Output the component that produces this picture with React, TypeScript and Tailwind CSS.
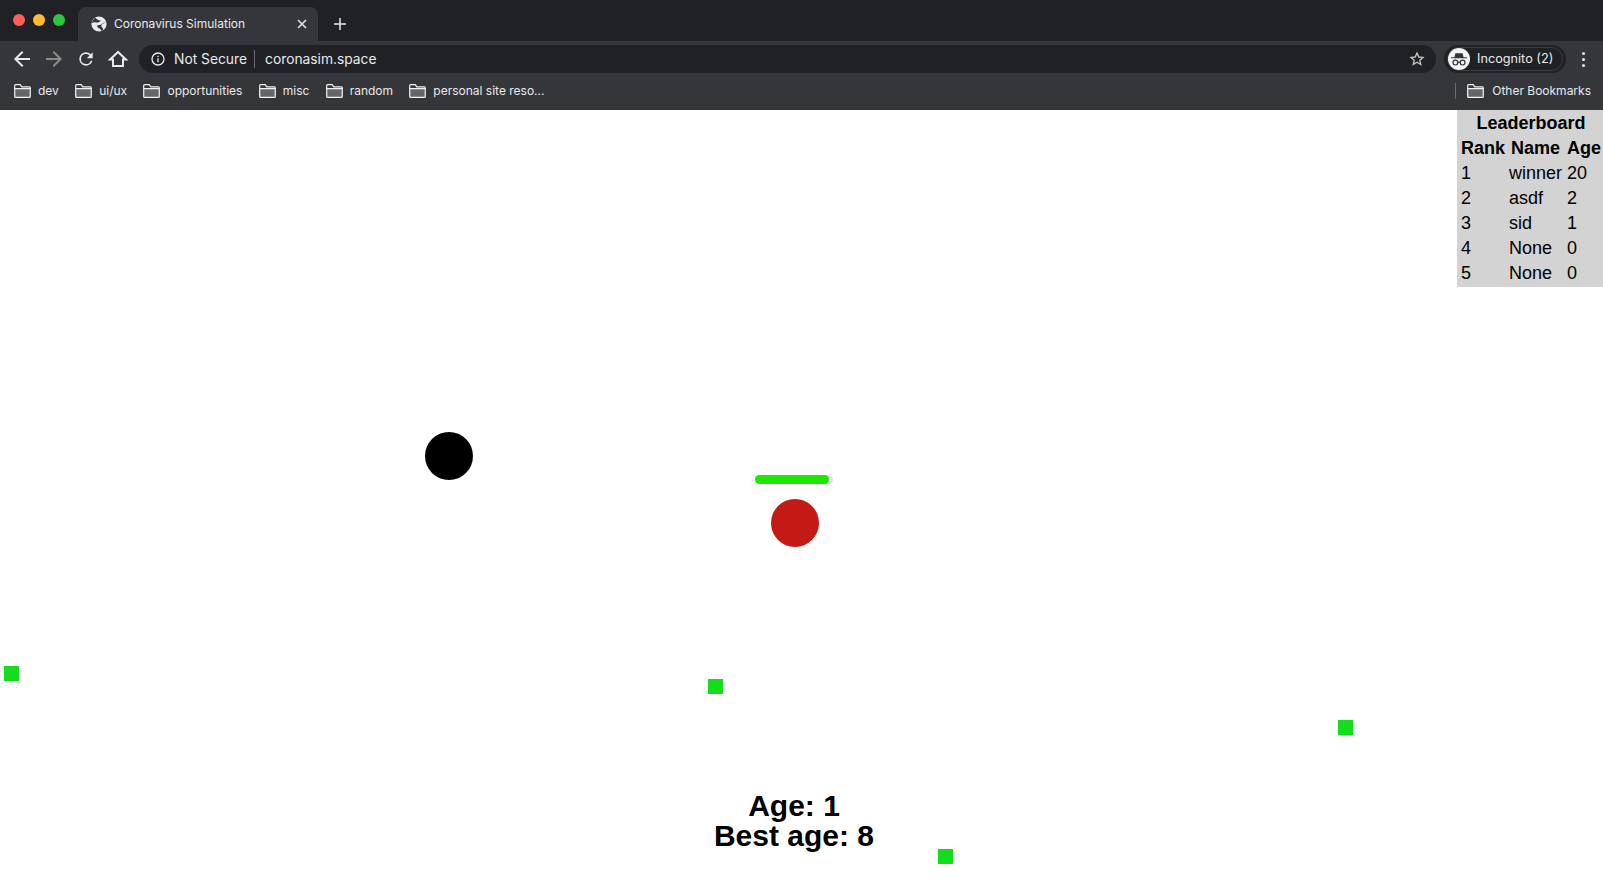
const font = "font-['Inter','Liberation_Sans',sans-serif]"

const bookmarks = ['dev', 'ui/ux', 'opportunities', 'misc', 'random', 'personal site reso...']

const scores = [
  { rank: 1, name: 'winner', age: 20 },
  { rank: 2, name: 'asdf', age: 2 },
  { rank: 3, name: 'sid', age: 1 },
  { rank: 4, name: 'None', age: 0 },
  { rank: 5, name: 'None', age: 0 },
]

function Folder() {
  return (
    <svg width="17" height="14" viewBox="0 0 17 14" className="shrink-0">
      <path d="M1 4.5h15v7.7a1 1 0 0 1-1 1H2a1 1 0 0 1-1-1z" fill="#66676a" />
      <path
        d="M1.6.7h4.6l1.6 2.2h7.6a.9.9 0 0 1 .9.9v8.6a.9.9 0 0 1-.9.9H1.6a.9.9 0 0 1-.9-.9V1.6a.9.9 0 0 1 .9-.9zM.7 4.6h15.6"
        fill="none"
        stroke="#f1f3f4"
        strokeWidth="1.2"
      />
    </svg>
  )
}

function Globe() {
  return (
    <svg width="16" height="16" viewBox="0 0 16 16">
      <circle cx="8" cy="8" r="7.6" fill="#e8eaed" />
      <path d="M4.6 1.8C6 4 8 4.6 9.6 4.4 9 6 7 6.6 4.8 6.4 3.4 6.2 2 6.4.9 7 1.2 5 2.6 3 4.6 1.8z" fill="#35363a" />
      <path d="M15 6.6c-1.4.4-3.2.9-4.2 2.2-1 1.2-.4 2.2.4 2.8.7.6.9 1.6 1 2.4-.7.5-1.3.8-2 1 0-1.5-1-2.2-2.2-2.8-1.4-.6-1.9-1.8-1.8-3 1.8.4 4.2-.2 5.3-1.6.8-1 2-1.3 3.5-1z" fill="#35363a" />
    </svg>
  )
}

function ArrowIcon({ back, color }: { back?: boolean; color: string }) {
  return (
    <svg width="16" height="16" viewBox="0 0 16 16" fill={color} className={back ? '' : 'rotate-180'}>
      <path d="M16 7H3.8l5.6-5.6L8 0 0 8l8 8 1.4-1.4L3.8 9H16z" />
    </svg>
  )
}

function Incognito() {
  return (
    <svg width="22" height="22" viewBox="0 0 22 22" className="shrink-0">
      <circle cx="11" cy="11" r="11" fill="#f1f3f4" />
      <path d="M7.4 5.2h7.2l1 4H19v1H3v-1h3.4z" fill="#35363a" />
      <circle cx="7.4" cy="14.6" r="2.4" fill="none" stroke="#35363a" strokeWidth="1.2" />
      <circle cx="14.6" cy="14.6" r="2.4" fill="none" stroke="#35363a" strokeWidth="1.2" />
      <path d="M9.8 14.2h2.4" stroke="#35363a" strokeWidth="1.2" />
    </svg>
  )
}

function BrowserChrome() {
  return (
    <div className={`h-[110px] shrink-0 bg-[#35363a] text-[#e8eaed] ${font}`}>
      {/* Tab strip */}
      <div className="flex h-[41px] bg-[#202124]">
        <div className="flex w-[78px] items-start gap-2 pl-[13px] pt-[14px]">
          <span className="h-3 w-3 rounded-full bg-[#ff5f57]" />
          <span className="h-3 w-3 rounded-full bg-[#febc2e]" />
          <span className="h-3 w-3 rounded-full bg-[#28c840]" />
        </div>
        <div className="mt-[7px] flex h-[34px] w-[240px] items-center rounded-t-lg bg-[#35363a] pl-[13px] pr-[11px]">
          <Globe />
          <span className="ml-[7px] flex-1 text-[12px]">Coronavirus Simulation</span>
          <svg width="10" height="10" viewBox="0 0 10 10" stroke="#e8eaed" strokeWidth="1.5">
            <path d="M1 1l8 8M9 1l-8 8" />
          </svg>
        </div>
        <svg width="14" height="14" viewBox="0 0 14 14" stroke="#e8eaed" strokeWidth="1.5" className="ml-[15px] mt-[17px]">
          <path d="M7 1v12M1 7h12" />
        </svg>
      </div>

      {/* Toolbar */}
      <div className="flex h-[36px] items-center py-[4px] pl-[14px] pr-[18px]">
        <ArrowIcon back color="#e8eaed" />
        <span className="ml-[16px]">
          <ArrowIcon color="#8a8b8d" />
        </span>
        <svg width="20" height="20" viewBox="0 0 24 24" fill="#e8eaed" className="ml-[14px]">
          <path d="M17.65 6.35A7.96 7.96 0 0 0 12 4a8 8 0 1 0 7.73 10h-2.08A6 6 0 1 1 12 6c1.66 0 3.14.69 4.22 1.78L13 11h7V4z" />
        </svg>
        <svg width="20" height="20" viewBox="0 0 24 24" fill="none" stroke="#e8eaed" strokeWidth="2.4" className="ml-[12px] shrink-0">
          <path d="M12 3.5 2.5 12.5H6v8h12v-8h3.500z" />
        </svg>
        <div className="ml-[11px] flex h-[28px] min-w-0 flex-1 items-center rounded-full bg-[#202124] pl-[11px] pr-[11px]">
          <svg width="16" height="16" viewBox="0 0 24 24" fill="#e8eaed">
            <path d="M11 7h2v2h-2zm0 4h2v6h-2zm1-9a10 10 0 1 0 0 20 10 10 0 0 0 0-20zm0 18a8 8 0 1 1 0-16 8 8 0 0 1 0 16z" />
          </svg>
          <span className="ml-[8px] text-[13.8px]">Not Secure</span>
          <span className="mx-[7px] h-[18px] w-px bg-[#6a6b6e]" />
          <span className="ml-[3px] flex-1 text-[13.8px]">coronasim.space</span>
          <svg width="16" height="16" viewBox="0 0 24 24" fill="none" stroke="#c4c5c7" strokeWidth="2">
            <path d="m12 3 2.7 6 6.3.6-4.800 4.200 1.400 6.400L12 16.900l-5.600 3.300 1.400-6.400L3 9.600 9.300 9z" />
          </svg>
        </div>
        <div className="ml-[8px] flex h-[28px] w-[122px] shrink-0 items-center rounded-full bg-[#202124] px-[3px]">
          <div className="flex h-[24px] flex-1 items-center rounded-full border border-[#3c3d41] pr-[5px]">
            <Incognito />
            <span className="ml-[7px] whitespace-nowrap text-[12.7px]">Incognito (2)</span>
          </div>
        </div>
        <div className="ml-[16px] flex flex-col gap-[3px]">
          <span className="h-[3px] w-[3px] rounded-full bg-[#e8eaed]" />
          <span className="h-[3px] w-[3px] rounded-full bg-[#e8eaed]" />
          <span className="h-[3px] w-[3px] rounded-full bg-[#e8eaed]" />
        </div>
      </div>

      {/* Bookmarks bar */}
      <div className="flex h-[27px] items-center pl-[14px] pr-[12px] text-[12px]">
        {bookmarks.map(name => (
          <div key={name} className="mr-[16.3px] flex items-center gap-[7px]">
            <Folder />
            <span>{name}</span>
          </div>
        ))}
        <div className="ml-auto flex items-center">
          <span className="mr-[11px] h-[16px] w-px bg-[#6a6b6e]" />
          <Folder />
          <span className="ml-[8px]">Other Bookmarks</span>
        </div>
      </div>
    </div>
  )
}

function Leaderboard() {
  return (
    <div className="absolute right-0 top-0 w-[146px] bg-[#d3d3d3] pl-px">
      <table className="border-separate border-spacing-[2px] text-[18px] leading-[21px] text-black">
        <thead>
          <tr>
            <th colSpan={3} className="p-px text-center font-bold">Leaderboard</th>
          </tr>
          <tr>
            <th className="p-px text-center font-bold">Rank</th>
            <th className="p-px pr-[2px] text-center font-bold">Name</th>
            <th className="p-px text-center font-bold">Age</th>
          </tr>
        </thead>
        <tbody>
          {scores.map(s => (
            <tr key={s.rank}>
              <td className="p-px">{s.rank}</td>
              <td className="p-px pr-[2px]">{s.name}</td>
              <td className="p-px">{s.age}</td>
            </tr>
          ))}
        </tbody>
      </table>
    </div>
  )
}

export default function App() {
  return (
    <div className="flex h-[896px] w-[1603px] flex-col overflow-hidden bg-white font-['Liberation_Sans',sans-serif]">
      <BrowserChrome />
      <div className="relative flex-1">
        <Leaderboard />

        {/* Game canvas */}
        <div className="absolute left-[425px] top-[321.5px] h-[48px] w-[48px] rounded-full bg-black" />
        <div className="absolute left-[755px] top-[365px] h-[9px] w-[78px] rounded-full bg-[#e4e4e4]">
          <div className="h-full w-[74px] rounded-full bg-[#1bea00]" />
        </div>
        <div className="absolute left-[770.5px] top-[389px] h-[48px] w-[48px] rounded-full bg-[#c41a16]" />
        <div className="absolute left-[4px] top-[556px] h-[15px] w-[15px] bg-[#14dd1b]" />
        <div className="absolute left-[708px] top-[569px] h-[15px] w-[15px] bg-[#14dd1b]" />
        <div className="absolute left-[1338px] top-[610px] h-[15px] w-[15px] bg-[#14dd1b]" />
        <div className="absolute left-[938px] top-[739px] h-[15px] w-[15px] bg-[#14dd1b]" />

        <div className="absolute left-[644px] top-[680.5px] w-[300px] text-center text-[30px] font-bold leading-[30px] text-black">
          <div>Age: 1</div>
          <div>Best age: 8</div>
        </div>
      </div>
    </div>
  )
}
